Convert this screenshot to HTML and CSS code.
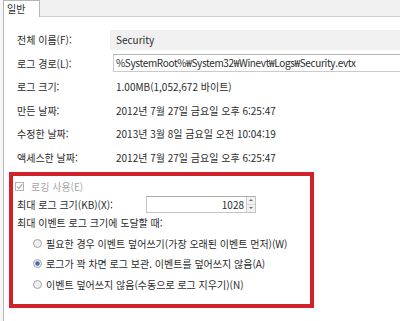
FILE: index.html
```html
<!DOCTYPE html>
<html lang="ko">
<head>
    <meta charset="UTF-8">
    <title>Security 속성</title>
    <link rel="stylesheet" href="styles.css">
</head>
<body>
    <div class="tabs">
        <div class="tab">일반</div>
        <div class="tab-strip"></div>
    </div>
    <div class="panel">
        <div class="props">
            <span class="label">전체 이름(F):</span>
            <span class="value field-ro">Security</span>
            <span class="label">로그 경로(L):</span>
            <span class="value field-box path">%SystemRoot%₩System32₩Winevt₩Logs₩Security.evtx</span>
            <span class="label">로그 크기:</span>
            <span class="value">1.00MB(1,052,672 바이트)</span>
            <span class="label">만든 날짜:</span>
            <span class="value">2012년 7월 27일 금요일 오후 6:25:47</span>
            <span class="label">수정한 날짜:</span>
            <span class="value">2013년 3월 8일 금요일 오전 10:04:19</span>
            <span class="label">액세스한 날짜:</span>
            <span class="value">2012년 7월 27일 금요일 오후 6:25:47</span>
        </div>

        <div class="highlight">
            <div class="check-row disabled">
                <svg class="checkbox" width="9" height="9" viewBox="0 0 9 9">
                    <rect x="0.5" y="0.5" width="8" height="8" fill="#fafafa" stroke="#b4b4b4"/>
                    <path d="M2 4.6 L3.8 6.4 L7 2.4" fill="none" stroke="#a8a8a8" stroke-width="1.1"/>
                </svg>
                <span>로깅 사용(E)</span>
            </div>
            <div class="size-row">
                <span class="size-label">최대 로그 크기(KB)(X):</span>
                <div class="spinbox">
                    <span class="spin-value">1028</span>
                    <span class="spin-buttons">
                        <span class="spin-up"></span>
                        <span class="spin-down"></span>
                    </span>
                </div>
            </div>
            <div class="when-row">최대 이벤트 로그 크기에 도달할 때:</div>
            <div class="radios">
                <div class="radio-row">
                    <svg class="radio" width="9" height="9" viewBox="0 0 9 9">
                        <circle cx="4.5" cy="4.5" r="4" fill="#efefef" stroke="#a4a4a4"/>
                    </svg>
                    <span>필요한 경우 이벤트 덮어쓰기(가장 오래된 이벤트 먼저)(W)</span>
                </div>
                <div class="radio-row">
                    <svg class="radio" width="9" height="9" viewBox="0 0 9 9">
                        <circle cx="4.5" cy="4.5" r="4" fill="#efefef" stroke="#a4a4a4"/>
                        <circle cx="4.5" cy="4.5" r="2.2" fill="#3b6db3"/>
                    </svg>
                    <span>로그가 꽉 차면 로그 보관. 이벤트를 덮어쓰지 않음(A)</span>
                </div>
                <div class="radio-row">
                    <svg class="radio" width="9" height="9" viewBox="0 0 9 9">
                        <circle cx="4.5" cy="4.5" r="4" fill="#efefef" stroke="#a4a4a4"/>
                    </svg>
                    <span>이벤트 덮어쓰지 않음(수동으로 로그 지우기)(N)</span>
                </div>
            </div>
        </div>
    </div>
</body>
</html>
```

FILE: styles.css
```css
body {
    margin: 0;
    background: #f6f6f6;
    color: #2b2b2b;
    font-family: "Noto Sans CJK KR", "Noto Sans", sans-serif;
    font-size: 10px;
    height: 321px;
    overflow: hidden;
}
.tabs {
    display: flex;
    height: 17px;
    margin-left: 3px;
}
.tab {
    width: 32px;
    padding-left: 3px;
    border: 1px solid #b6b6b6;
    border-bottom: none;
    background: #fff;
    line-height: 16px;
}
.tab-strip {
    flex: 1;
    background: #f0f0f0;
    border-bottom: 1px solid #cfcfcf;
}
.panel {
    margin-left: 3px;
    border-left: 1px solid #b6b6b6;
    background: #fff;
    padding: 11px 0 0 5px;
    height: 293px;
}
.props {
    display: grid;
    grid-template-columns: 93px 1fr;
    grid-auto-rows: 23.5px;
    align-items: center;
    padding-left: 8px;
}
.value {
    padding-left: 6px;
    white-space: nowrap;
}
.field-ro {
    background: #f0f0f0;
    height: 20px;
    line-height: 20px;
}
.field-box {
    margin-left: 3px;
    padding-left: 2px;
    height: 16px;
    line-height: 16px;
    border: 1px solid #cacaca;
    border-top-color: #b4b4b4;
    border-right: none;
}
.path {
    letter-spacing: -0.35px;
}
.highlight {
    box-sizing: border-box;
    width: 305px;
    height: 136px;
    margin-top: 3px;
    border: 4px solid #d0222b;
    padding: 1px 0 0 4px;
}
.check-row {
    display: flex;
    align-items: center;
    gap: 7px;
    height: 18px;
    margin-left: -2px;
}
.disabled {
    color: #a4a4a4;
}
.size-row {
    display: flex;
    align-items: center;
    height: 18px;
}
.size-label {
    width: 129px;
}
.spinbox {
    display: flex;
    width: 110px;
    height: 17px;
    box-sizing: border-box;
    border: 1px solid #c4c4c4;
    border-top-color: #aeaeae;
}
.spin-value {
    flex: 1;
    text-align: right;
    padding-right: 2px;
    line-height: 15px;
}
.spin-buttons {
    display: flex;
    flex-direction: column;
    width: 8px;
    border-left: 1px solid #cfcfcf;
    background: #f3f3f3;
}
.spin-up, .spin-down {
    flex: 1;
    display: flex;
    align-items: center;
    justify-content: center;
}
.spin-up {
    border-bottom: 1px solid #d6d6d6;
}
.spin-up::before {
    content: "";
    border: 2px solid transparent;
    border-bottom: 2px solid #6a6a6a;
    border-top: none;
}
.spin-down::before {
    content: "";
    border: 2px solid transparent;
    border-top: 2px solid #6a6a6a;
    border-bottom: none;
}
.when-row {
    height: 20px;
    line-height: 20px;
}
.radios {
    padding-left: 16px;
}
.radio-row {
    display: flex;
    align-items: center;
    gap: 4px;
    height: 20.5px;
    white-space: nowrap;
}
```
